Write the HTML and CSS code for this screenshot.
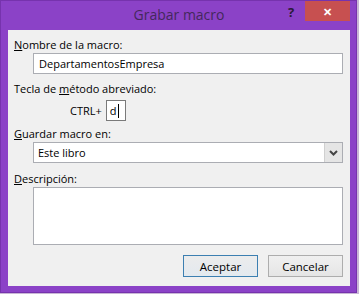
FILE: index.html
```html
<!DOCTYPE html>
<html lang="es">
<head>
    <meta charset="UTF-8">
    <title>Grabar macro</title>
    <link rel="stylesheet" href="styles.css">
</head>
<body>
    <div class="window">
        <div class="titlebar">
            <div class="title-spacer"></div>
            <div class="title">Grabar macro</div>
            <div class="title-controls">
                <span class="help">?</span>
                <span class="close">&#x2715;</span>
            </div>
        </div>
        <div class="client">
            <div class="label"><u>N</u>ombre de la macro:</div>
            <div class="field name-field">DepartamentosEmpresa</div>

            <div class="label shortcut-label">Tecla de <u>m</u>étodo abreviado:</div>
            <div class="shortcut">
                <span class="ctrl">CTRL+</span>
                <span class="key-box">d<span class="caret"></span></span>
            </div>

            <div class="label store-label"><u>G</u>uardar macro en:</div>
            <div class="field select-field">
                <span class="select-text">Este libro</span>
                <span class="select-arrow">
                    <svg width="9" height="6" viewBox="0 0 9 6"><path d="M1 1 L4.5 4.5 L8 1" fill="none" stroke="#444" stroke-width="2"/></svg>
                </span>
            </div>

            <div class="label desc-label"><u>D</u>escripción:</div>
            <div class="field desc-field"></div>

            <div class="buttons">
                <button type="button" class="btn default">Aceptar</button>
                <button type="button" class="btn">Cancelar</button>
            </div>
        </div>
    </div>
</body>
</html>
```

FILE: styles.css
```css
body {
    margin: 0;
    background-color: #c9b7d6;
    font-family: "Open Sans", "Noto Sans", sans-serif;
}
.window {
    width: 357px;
    height: 293px;
    box-sizing: border-box;
    background-color: #8b42c7;
    border: 1px solid #7633ad;
    padding: 0 6px 6px 7px;
    display: flex;
    flex-direction: column;
}
.titlebar {
    height: 29px;
    display: flex;
    align-items: flex-start;
}
.title-spacer {
    width: 70px;
}
.title {
    flex: 1;
    text-align: center;
    font-size: 14px;
    color: #44285c;
    padding-top: 4px;
}
.title-controls {
    width: 70px;
    display: flex;
    justify-content: flex-end;
}
.help {
    width: 22px;
    font-size: 13px;
    font-weight: bold;
    color: #2a1a3a;
    text-align: center;
    padding-top: 2px;
}
.close {
    width: 45px;
    height: 20px;
    margin-left: 3px;
    background-color: #c75050;
    color: #fff;
    font-size: 11px;
    font-weight: bold;
    display: flex;
    align-items: center;
    justify-content: center;
}
.client {
    flex: 1;
    background-color: #f0f0f0;
    padding: 8px 7px 0 6px;
    font-size: 11px;
    color: #000;
    display: flex;
    flex-direction: column;
}
.label {
    height: 14px;
    line-height: 14px;
}
.field {
    margin-left: 19px;
    background-color: #fff;
    border: 1px solid #abadb3;
    box-sizing: border-box;
}
.name-field {
    margin-top: 1px;
    height: 21px;
    line-height: 19px;
    padding-left: 5px;
}
.shortcut-label {
    margin-top: 8px;
}
.shortcut {
    display: flex;
    align-items: center;
    margin-top: 4px;
    margin-left: 56px;
}
.ctrl {
    margin-right: 4px;
}
.key-box {
    width: 20px;
    height: 21px;
    box-sizing: border-box;
    border: 1px solid #7a7a7a;
    background-color: #fff;
    padding-left: 3px;
    display: flex;
    align-items: center;
}
.caret {
    width: 1px;
    height: 14px;
    background-color: #000;
    margin-left: 1px;
}
.store-label {
    margin-top: 6px;
}
.select-field {
    margin-top: 1px;
    height: 21px;
    display: flex;
}
.select-text {
    flex: 1;
    padding-left: 4px;
    line-height: 19px;
}
.select-arrow {
    width: 17px;
    background-color: #e5e5e5;
    border-left: 1px solid #d0d0d0;
    display: flex;
    align-items: center;
    justify-content: center;
}
.desc-label {
    margin-top: 9px;
}
.desc-field {
    margin-top: 1px;
    height: 58px;
}
.buttons {
    display: flex;
    justify-content: flex-end;
    gap: 10px;
    margin-top: 10px;
}
.btn {
    width: 75px;
    height: 22px;
    font-family: inherit;
    font-size: 11.5px;
    color: #000;
    border: 1px solid #adadad;
    background: linear-gradient(#f0f0f0, #e5e5e5);
    padding: 0;
}
.btn.default {
    border-color: #3c7fb1;
    background: linear-gradient(#ececec, #e3e9ef);
}
```
